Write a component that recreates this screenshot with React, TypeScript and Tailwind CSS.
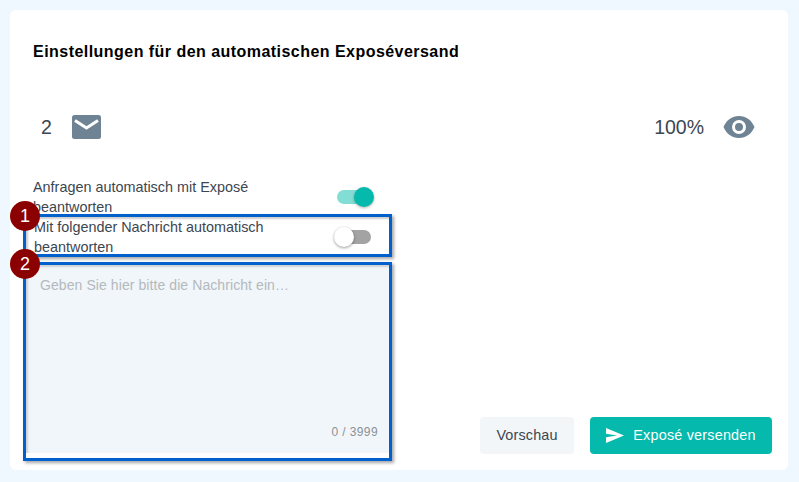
function MailIcon() {
  return (
    <svg width="29" height="24" viewBox="0 0 29 24" className="shrink-0">
      <rect width="29" height="24" rx="2.500" fill="#6e8494" />
      <path d="M3 5.500 14.500 13 26 5.500" fill="none" stroke="#fff" strokeWidth="3" />
    </svg>
  );
}

function EyeIcon() {
  return (
    <svg width="32" height="22" viewBox="0 0 32 22" className="shrink-0">
      <path
        d="M16 0C9 0 3.200 4.400 0.500 11 3.200 17.600 9 22 16 22s12.800-4.400 15.500-11C28.800 4.400 23 0 16 0Zm0 18a7 7 0 1 1 0-14 7 7 0 0 1 0 14Zm0-11a4 4 0 1 0 0 8 4 4 0 0 0 0-8Z"
        fill="#6e8494"
      />
    </svg>
  );
}

function Badge({ n }: { n: number }) {
  return (
    <span className="absolute -left-[16px] -top-[16px] flex h-[30px] w-[30px] items-center justify-center rounded-full bg-[#8b0000] text-[18px] leading-none tracking-normal text-white">
      {n}
    </span>
  );
}

export default function App() {
  return (
    <div className="h-[482px] w-[799px] overflow-hidden bg-[#f0f8ff] p-[10px] font-['Liberation_Sans',Arial,sans-serif]">
      <div className="flex h-[460px] w-[778px] flex-col rounded-[6px] bg-white pl-[23px] pr-[16px]">
        <h1 className="mt-[32px] text-[16px] font-bold leading-[20px] tracking-[0.46px] text-black">
          Einstellungen für den automatischen Exposéversand
        </h1>

        <div className="mt-[53px] flex items-center justify-between pl-[8px] pr-[17px] text-[19.5px] leading-[24px] text-[#3c4650]">
          <div className="flex items-center gap-[20px]">
            <span>2</span>
            <MailIcon />
          </div>
          <div className="flex items-center gap-[19px]">
            <span>100%</span>
            <EyeIcon />
          </div>
        </div>

        <div className="mt-[38px] flex flex-1 items-end justify-between">
          <div className="w-[369px] self-start text-[14.4px] leading-[20px] text-[#3c4650]">
            <div className="flex w-[337px] items-center justify-between">
              <p className="w-[240px]">Anfragen automatisch mit Exposé beantworten</p>
              <span className="relative block h-[14px] w-[33px] rounded-full bg-[#82ded4]">
                <span className="absolute -right-[4px] -top-[3px] h-[20px] w-[20px] rounded-full bg-[#05b9ac] shadow-[0_1px_3px_rgba(0,0,0,0.3)]" />
              </span>
            </div>

            <div className="relative -ml-[10px] -mt-[3px] box-border flex h-[43px] w-[369px] items-center justify-between border-[3px] border-[#0061cc] bg-white pl-[8px] pr-[18px] pt-[2px] shadow-[2px_2px_3px_rgba(0,0,0,0.35),inset_2px_2px_2px_rgba(0,0,0,0.2)]">
              <p className="w-[240px]">Mit folgender Nachricht automatisch beantworten</p>
              <span className="relative block h-[14px] w-[34px] rounded-full bg-[#a3a3a3]">
                <span className="absolute -left-[3px] -top-[3px] h-[20px] w-[20px] rounded-full bg-white shadow-[0_1px_3px_rgba(0,0,0,0.4)]" />
              </span>
              <Badge n={1} />
            </div>

            <div className="relative -ml-[10px] mt-[5px] box-border h-[199px] w-[369px] border-[3px] border-[#0061cc] bg-white shadow-[2px_2px_3px_rgba(0,0,0,0.35)]">
              <div className="flex h-[188px] flex-col justify-between bg-[#f1f6fa] pb-[13px] pl-[14px] pr-[11px] pt-[10px] shadow-[inset_2px_2px_2px_rgba(0,0,0,0.15)]">
                <p className="text-[14px] leading-[20px] tracking-[0.08px] text-[#b4b9bd]">
                  Geben Sie hier bitte die Nachricht ein…
                </p>
                <p className="text-right text-[12px] leading-[16px] tracking-[0.4px] text-[#8c9196]">0 / 3999</p>
              </div>
              <Badge n={2} />
            </div>
          </div>

          <div className="mb-[16px] flex items-center gap-[16px]">
            <button className="h-[37px] w-[94px] rounded-[4px] bg-[#f2f6f9] text-[14.4px] tracking-[0.15px] text-[#3c4650]">
              Vorschau
            </button>
            <button className="flex h-[37px] w-[182px] items-center justify-center gap-[9px] rounded-[4px] bg-[#05b9ac] text-[14.4px] tracking-[0.2px] text-white">
              <svg width="18" height="15" viewBox="0 0 18 15">
                <path d="M0 0 18 7.500 0 15 0 9.200 11 7.500 0 5.800Z" fill="#fff" />
              </svg>
              Exposé versenden
            </button>
          </div>
        </div>
      </div>
    </div>
  );
}
